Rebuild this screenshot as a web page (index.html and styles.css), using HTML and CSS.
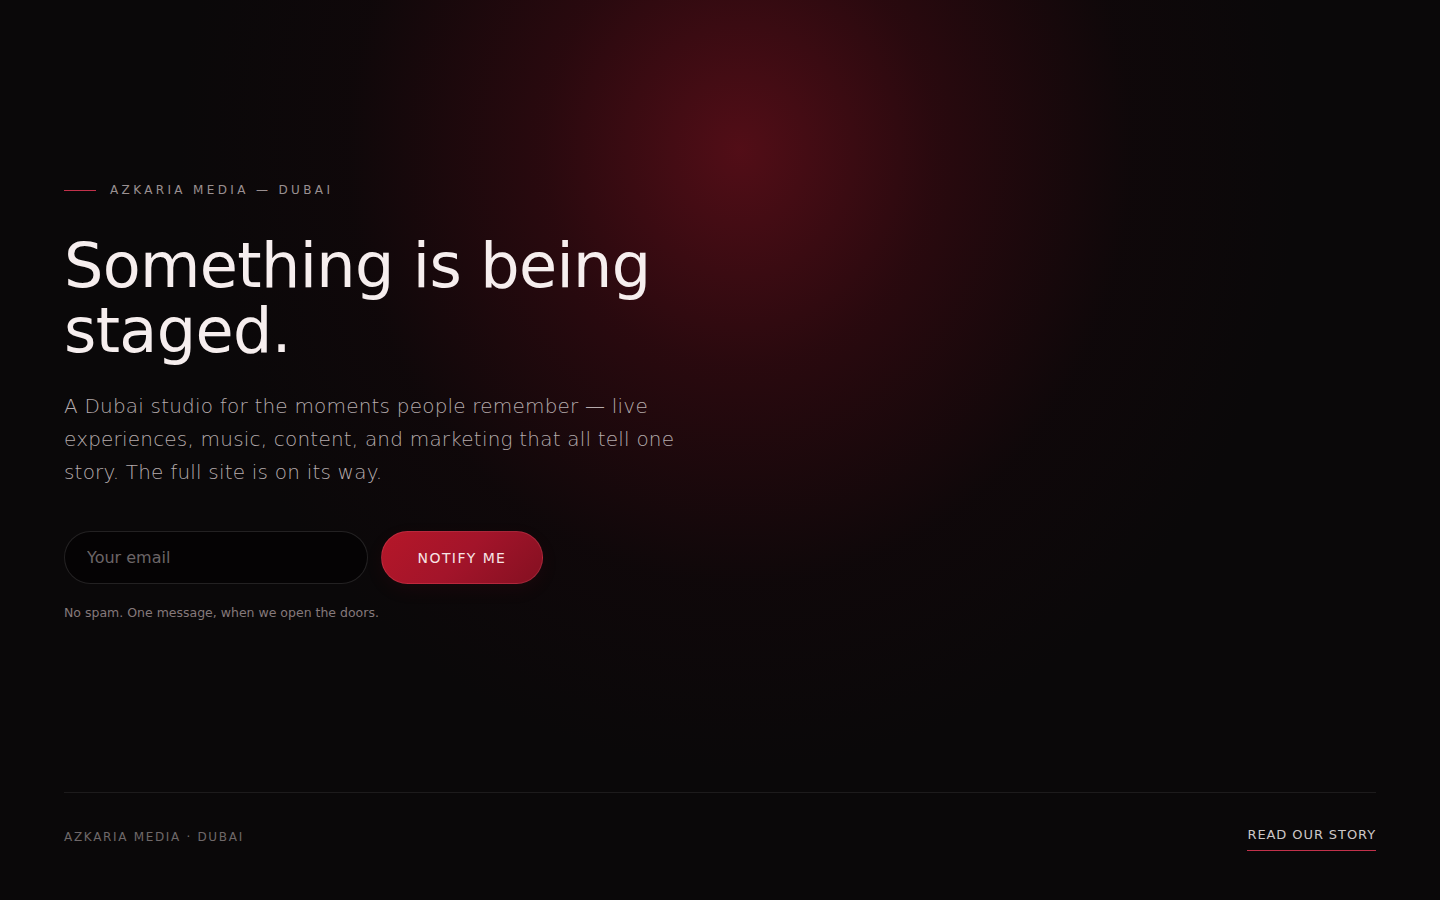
FILE: index.html
```html
<!DOCTYPE html>
<html lang="en">
<head>
<meta charset="utf-8">
<title>Azkaria Media — Dubai</title>
<link rel="stylesheet" href="styles.css">
</head>
<body>
<div class="page">
  <main class="hero">
    <div class="content">
      <div class="eyebrow"><span class="eyebrow-line"></span><span>AZKARIA MEDIA — DUBAI</span></div>
      <h1 class="title">Something is being<br>staged.</h1>
      <p class="lead">A Dubai studio for the moments people remember — live experiences, music, content, and marketing that all tell one story. The full site is on its way.</p>
      <form class="signup">
        <input class="email" type="email" placeholder="Your email">
        <button class="notify" type="button">NOTIFY ME</button>
      </form>
      <p class="note">No spam. One message, when we open the doors.</p>
    </div>
  </main>
  <footer class="footer">
    <span class="footer-brand">AZKARIA MEDIA · DUBAI</span>
    <a class="footer-link" href="#">READ OUR STORY</a>
  </footer>
</div>
</body>
</html>
```
FILE: styles.css
```css
* { box-sizing: border-box; }
html, body { margin: 0; height: 100%; }
body {
  background: #0a0809;
  font-family: "DejaVu Sans", sans-serif;
  color: #f3ecec;
}
.page {
  min-height: 100vh;
  display: flex;
  flex-direction: column;
  padding: 0 64px;
  background:
    radial-gradient(ellipse 560px 620px at 740px 150px, rgba(88, 14, 24, 0.92) 0%, rgba(62, 10, 18, 0.6) 35%, rgba(26, 7, 11, 0.3) 70%, rgba(10, 8, 9, 0) 100%),
    #0a0809;
}
.hero {
  flex: 1;
  display: flex;
  align-items: flex-start;
  padding-top: 183px;
}
.content {
  width: 640px;
}
.eyebrow {
  display: flex;
  align-items: center;
  gap: 14px;
  height: 14px;
  font-size: 12px;
  letter-spacing: 0.28em;
  color: #9a9091;
}
.eyebrow-line {
  width: 32px;
  height: 1px;
  background: #c2314b;
}
.title {
  margin: 36px 0 0;
  font-size: 62px;
  font-weight: 400;
  line-height: 65px;
  color: #f6eeee;
  letter-spacing: -0.01em;
}
.lead {
  margin: 27px 0 0;
  width: 640px;
  font-size: 20px;
  font-weight: 200;
  line-height: 33px;
  letter-spacing: 0.01em;
  color: #b5abac;
}
.signup {
  display: flex;
  gap: 13px;
  margin: 42px 0 0;
}
.email {
  width: 304px;
  height: 53px;
  border-radius: 27px;
  border: 1px solid rgba(255, 255, 255, 0.12);
  background: #050304;
  padding: 0 22px;
  font-family: "DejaVu Sans", sans-serif;
  font-size: 16px;
  color: #ddd;
  outline: none;
}
.email::placeholder { color: #6c6567; }
.notify {
  width: 162px;
  height: 53px;
  border-radius: 27px;
  border: 1px solid rgba(255, 120, 140, 0.2);
  background: linear-gradient(135deg, #b51729 0%, #a3142a 50%, #841021 100%);
  font-family: "DejaVu Sans", sans-serif;
  font-size: 14px;
  letter-spacing: 0.1em;
  color: #f7e4e5;
  cursor: pointer;
  box-shadow: 0 6px 18px rgba(160, 20, 40, 0.08);
}
.note {
  margin: 21px 0 0;
  font-size: 12.5px;
  line-height: 15px;
  color: #85797b;
}
.footer {
  border-top: 1px solid rgba(255, 255, 255, 0.08);
  height: 108px;
  display: flex;
  justify-content: space-between;
  align-items: center;
  padding-bottom: 20px;
}
.footer-brand {
  font-size: 12px;
  letter-spacing: 0.14em;
  color: #6f6869;
}
.footer-link {
  font-size: 13px;
  letter-spacing: 0.07em;
  color: #cdc7c7;
  text-decoration: none;
  padding-bottom: 8px;
  border-bottom: 1px solid #c2314b;
  margin-top: 4px;
}
```
